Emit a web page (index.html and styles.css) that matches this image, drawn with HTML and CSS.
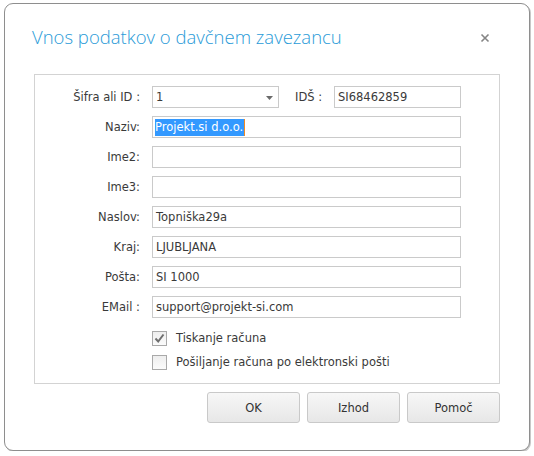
FILE: index.html
```html
<!DOCTYPE html>
<html lang="sl">
<head>
<meta charset="utf-8">
<link rel="stylesheet" href="styles.css">
</head>
<body>
<div class="dialog">
  <div class="titlebar">
    <span class="title">Vnos podatkov o davčnem zavezancu</span>
    <svg class="close" width="10" height="10" viewBox="0 0 10 10"><path d="M1.5 1.5L8.5 8.5M8.5 1.5L1.5 8.5" stroke="#858585" stroke-width="1.6" fill="none"/></svg>
  </div>
  <div class="group">
    <div class="form">
      <span class="lbl">Šifra ali ID :</span>
      <div class="row1">
        <div class="combo"><span>1</span><svg class="arrow" width="7" height="4" viewBox="0 0 7 4"><path d="M0 0H7L3.5 4Z" fill="#6a6a6a"/></svg></div>
        <span class="ids">IDŠ :</span>
        <div class="field short">SI68462859</div>
      </div>
      <span class="lbl">Naziv:</span>
      <div class="field"><span class="sel">Projekt.si d.o.o.</span></div>
      <span class="lbl">Ime2:</span>
      <div class="field"></div>
      <span class="lbl">Ime3:</span>
      <div class="field"></div>
      <span class="lbl">Naslov:</span>
      <div class="field">Topniška29a</div>
      <span class="lbl">Kraj:</span>
      <div class="field">LJUBLJANA</div>
      <span class="lbl">Pošta:</span>
      <div class="field">SI 1000</div>
      <span class="lbl">EMail :</span>
      <div class="field">support@projekt-si.com</div>
    </div>
    <div class="checks">
      <div class="check"><span class="box"><svg width="13" height="13" viewBox="0 0 13 13"><path d="M2.5 6.5L5.2 9.5L10.5 2.5" stroke="#6f6f6f" stroke-width="2" fill="none"/></svg></span><span>Tiskanje računa</span></div>
      <div class="check"><span class="box"></span><span>Pošiljanje računa po elektronski pošti</span></div>
    </div>
  </div>
  <div class="buttons">
    <div class="btn">OK</div>
    <div class="btn">Izhod</div>
    <div class="btn">Pomoč</div>
  </div>
</div>
</body>
</html>
```
FILE: styles.css
```css
* { box-sizing: border-box; }
html, body { margin: 0; padding: 0; background: #ffffff; }
body { padding: 3px 0 0 4px; font-family: "DejaVu Sans", sans-serif; font-size: 11.5px; color: #3a3a3a; }

.dialog {
  width: 526px;
  height: 448px;
  border: 1px solid #8e8e8e;
  border-radius: 9px;
  background: #ffffff;
  box-shadow: 1px 1px 0 #c8c8c8;
  padding: 0 29px 0 29px;
}

.titlebar {
  height: 70px;
  padding: 21px 0 0 0;
  display: flex;
  justify-content: space-between;
  align-items: flex-start;
}
.title {
  margin-left: -2px;
  font-family: "Open Sans", "Noto Sans", sans-serif;
  font-weight: 300;
  font-size: 18.5px;
  line-height: 24px;
  color: #2a9bd8;
}
.close { margin-top: 8px; margin-right: 10px; }

.group {
  border: 1px solid #d3d3d3;
  height: 310px;
  padding: 11px 0 0 0;
}

.form {
  display: grid;
  grid-template-columns: 105px 309px;
  column-gap: 12px;
  grid-auto-rows: 22px;
  row-gap: 8px;
}
.lbl {
  text-align: right;
  line-height: 22px;
}
.row1 { display: flex; align-items: center; }
.combo {
  width: 127px;
  height: 22px;
  border: 1px solid #cacaca;
  display: flex;
  align-items: center;
  justify-content: space-between;
  padding: 0 5px 0 3px;
  line-height: 20px;
}
.arrow { margin-top: 1px; }
.ids { margin-left: 16px; width: 39px; }
.field {
  height: 22px;
  border: 1px solid #cacaca;
  line-height: 20px;
  padding: 0 3px;
  white-space: nowrap;
  overflow: hidden;
}
.field.short { width: 127px; }
.sel {
  background: #3399ff;
  color: #ffffff;
  display: inline-block;
  line-height: 17px;
  padding: 0 1px 0 0;
  margin-left: -1px;
  border-right: 1px solid #f08a24;
}

.checks { margin: 8px 0 0 117px; }
.check {
  height: 24px;
  display: flex;
  align-items: center;
}
.box {
  width: 15px;
  height: 15px;
  border: 1px solid #a9a9a9;
  background: linear-gradient(#eeeeee, #fbfbfb);
  margin-right: 9px;
  display: flex;
  align-items: center;
  justify-content: center;
}

.buttons {
  margin-top: 8px;
  display: flex;
  justify-content: flex-end;
  gap: 7px;
}
.btn {
  width: 93px;
  height: 31px;
  border: 1px solid #c9c9c9;
  border-radius: 3px;
  background: linear-gradient(#f7f7f7, #e7e7e7);
  display: flex;
  align-items: center;
  justify-content: center;
  color: #333333;
}
```
